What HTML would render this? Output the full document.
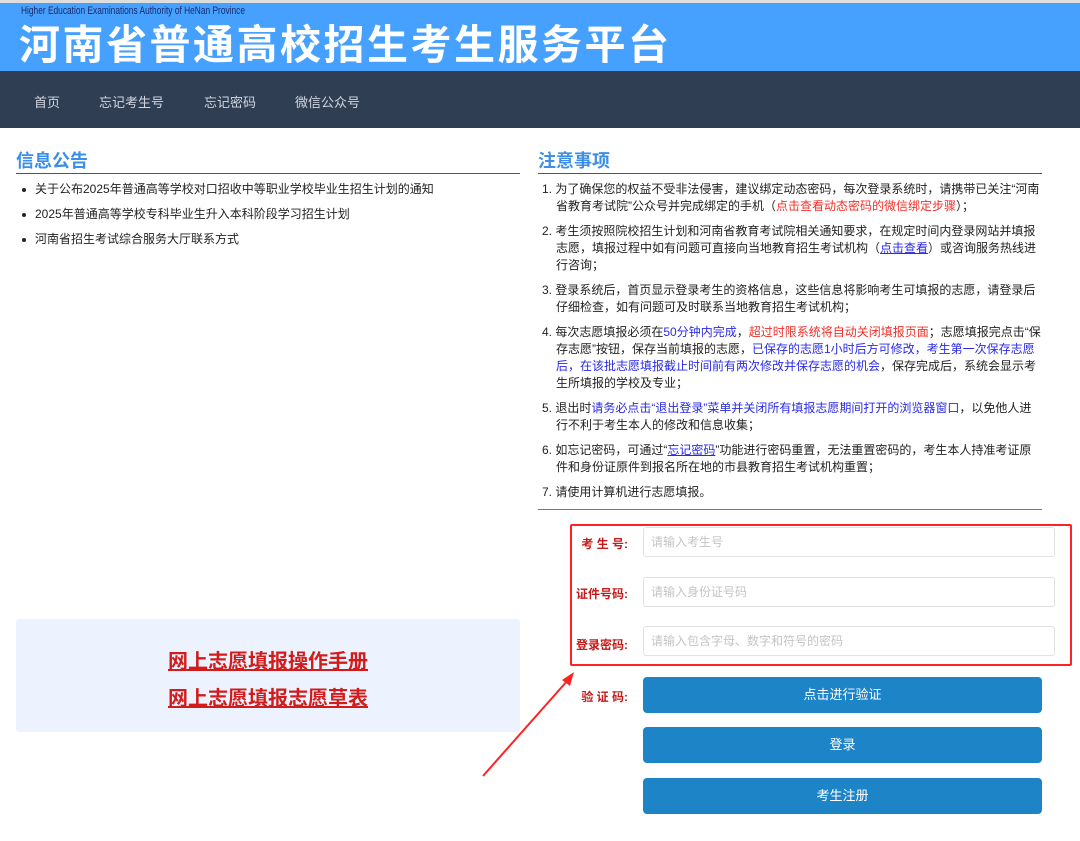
<!DOCTYPE html>
<html><head><meta charset="utf-8"><style>
*{margin:0;padding:0;box-sizing:border-box}
body{width:1080px;height:841px;background:#fff;font-family:"Liberation Sans","Noto Sans CJK SC",sans-serif;position:relative;overflow:hidden;color:#222}
.abs{position:absolute}
#top{left:0;top:0;width:1080px;height:3px;background:#ddd}
#hdr{left:0;top:3px;width:1080px;height:68px;background:#46a1fe}
#en{left:21px;top:5px;font-size:11px;color:#1a2a6a;transform:scaleX(0.76);transform-origin:left;white-space:nowrap}
#ttl{left:19px;top:17px;font-size:41px;color:#fff;letter-spacing:2.5px;font-weight:bold;line-height:48px;font-family:"Noto Sans CJK SC",sans-serif;white-space:nowrap}
#nav{left:0;top:71px;width:1080px;height:57px;background:#303e53}
.nv{top:92px;font-size:13px;color:#d0d6e0}
h2{position:absolute;font-size:18px;color:#3b8fe8;font-weight:bold;line-height:22px}
.ul{height:1px;background:#555}
ul.li{position:absolute;left:22px;top:181px;font-size:12px;list-style:none}
ul.li li{height:25px;line-height:17px;padding-left:13px;position:relative}
ul.li li:before{content:"";position:absolute;left:0;top:7px;width:4px;height:4px;border-radius:2px;background:#222}
ol{position:absolute;left:542px;top:181px;width:500px;font-size:12px;line-height:17px;list-style:none}
ol li{margin-bottom:8px;padding-left:14px;text-indent:-14px}
.r{color:#f0302a}.b{color:#2a2ae8}
a{color:#2a2ae8;text-decoration:underline}
#box{left:570px;top:524px;width:502px;height:142px;border:2px solid #f22;border-radius:2px}
.in{left:643px;width:412px;height:30px;border:1px solid #e2e2e2;border-radius:3px;font-size:12px;color:#c4c4c4;padding-left:7px;line-height:28px}
.lb{width:80px;left:548px;text-align:right;font-size:12px;font-weight:bold;color:#c41a1a}
.bt{left:643px;width:399px;height:36px;background:#1e84c8;border-radius:4px;color:#fff;font-size:13px;text-align:center;line-height:36px}
#lbox{left:16px;top:619px;width:504px;height:113px;background:#ecf3fe;border-radius:3px}
.lk{left:16px;width:504px;text-align:center;font-size:20px;font-weight:bold;color:#d21c1c;text-decoration:underline}
</style></head><body>
<div id="top" class="abs"></div>
<div id="hdr" class="abs"></div>
<div id="en" class="abs">Higher Education Examinations Authority of HeNan Province</div>
<div id="ttl" class="abs">河南省普通高校招生考生服务平台</div>
<div id="nav" class="abs"></div>
<div class="abs nv" style="left:34px">首页</div>
<div class="abs nv" style="left:99px">忘记考生号</div>
<div class="abs nv" style="left:204px">忘记密码</div>
<div class="abs nv" style="left:295px">微信公众号</div>

<h2 style="left:16px;top:150px">信息公告</h2>
<div class="abs ul" style="left:16px;top:173px;width:504px"></div>
<ul class="li">
<li>关于公布2025年普通高等学校对口招收中等职业学校毕业生招生计划的通知</li>
<li>2025年普通高等学校专科毕业生升入本科阶段学习招生计划</li>
<li>河南省招生考试综合服务大厅联系方式</li>
</ul>

<h2 style="left:538px;top:150px">注意事项</h2>
<div class="abs ul" style="left:538px;top:173px;width:504px"></div>
<ol>
<li>1. 为了确保您的权益不受非法侵害，建议绑定动态密码，每次登录系统时，请携带已关注“河南省教育考试院”公众号并完成绑定的手机（<span class="r">点击查看动态密码的微信绑定步骤</span>）；</li>
<li>2. 考生须按照院校招生计划和河南省教育考试院相关通知要求，在规定时间内登录网站并填报志愿，填报过程中如有问题可直接向当地教育招生考试机构（<a>点击查看</a>）或咨询服务热线进行咨询；</li>
<li>3. 登录系统后，首页显示登录考生的资格信息，这些信息将影响考生可填报的志愿，请登录后仔细检查，如有问题可及时联系当地教育招生考试机构；</li>
<li>4. 每次志愿填报必须在<span class="b">50分钟内完成</span>，<span class="r">超过时限系统将自动关闭填报页面</span>；志愿填报完点击“保存志愿”按钮，保存当前填报的志愿，<span class="b">已保存的志愿1小时后方可修改，考生第一次保存志愿后，在该批志愿填报截止时间前有两次修改并保存志愿的机会</span>，保存完成后，系统会显示考生所填报的学校及专业；</li>
<li>5. 退出时<span class="b">请务必点击“退出登录”菜单并关闭所有填报志愿期间打开的浏览器窗口</span>，以免他人进行不利于考生本人的修改和信息收集；</li>
<li>6. 如忘记密码，可通过“<a>忘记密码</a>”功能进行密码重置，无法重置密码的，考生本人持准考证原件和身份证原件到报名所在地的市县教育招生考试机构重置；</li>
<li>7. 请使用计算机进行志愿填报。</li>
</ol>
<div class="abs" style="left:538px;top:509px;width:504px;height:1px;background:#777"></div>

<div id="box" class="abs"></div>
<div class="abs lb" style="top:535px">考 生 号:</div>
<div class="abs lb" style="top:585px">证件号码:</div>
<div class="abs lb" style="top:636px">登录密码:</div>
<div class="abs in" style="top:527px">请输入考生号</div>
<div class="abs in" style="top:577px">请输入身份证号码</div>
<div class="abs in" style="top:626px">请输入包含字母、数字和符号的密码</div>
<div class="abs lb" style="top:688px">验 证 码:</div>
<div class="abs bt" style="top:677px">点击进行验证</div>
<div class="abs bt" style="top:727px">登录</div>
<div class="abs bt" style="top:778px">考生注册</div>

<div id="lbox" class="abs"></div>
<div class="abs lk" style="top:645px">网上志愿填报操作手册</div>
<div class="abs lk" style="top:682px">网上志愿填报志愿草表</div>

<svg class="abs" style="left:0;top:0" width="1080" height="841">
<line x1="483" y1="776" x2="568" y2="680" stroke="#f22" stroke-width="2"/>
<polygon points="574,672 562,680 570,686" fill="#f22"/>
</svg>
</body></html>
